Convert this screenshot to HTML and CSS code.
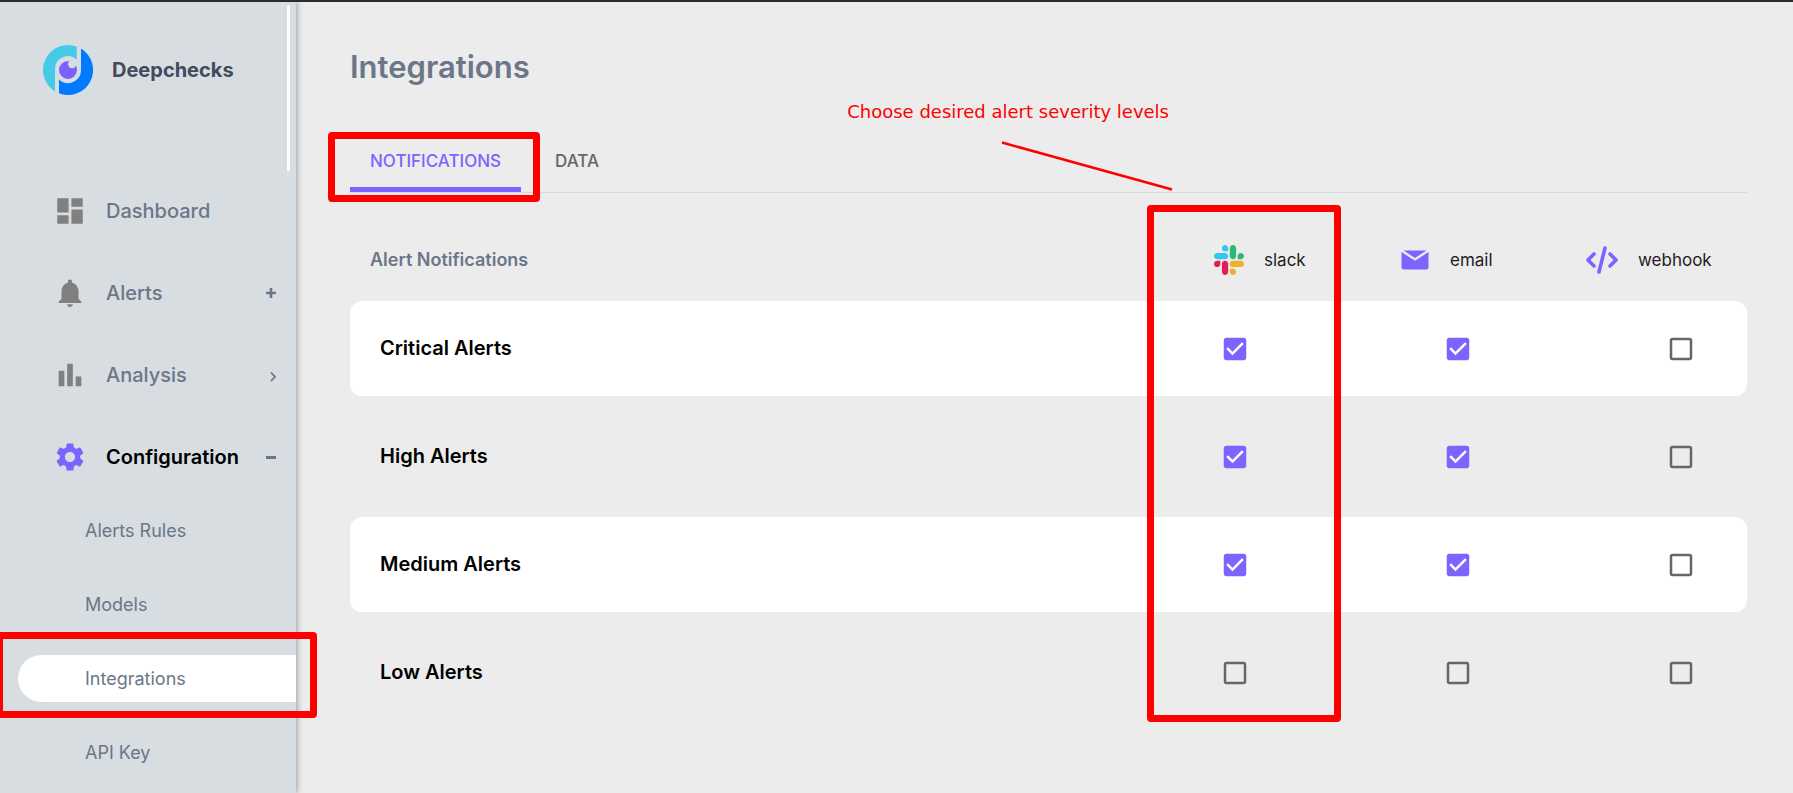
FILE: index.html
```html
<!DOCTYPE html>
<html lang="en">
<head>
<meta charset="utf-8">
<title>Deepchecks - Integrations</title>
<link rel="stylesheet" href="styles.css">
</head>
<body>
<div class="page">
  <aside class="sidebar">
    <div class="scroll-track"><div class="scroll-thumb"></div></div>
    <a class="brand" href="#">
      <svg class="brand-logo" viewBox="0 0 50 50" aria-hidden="true">
        <path fill="#43cbe8" d="M33.7 1.6V14.6A13 13 0 0 0 12 25V46.4A25 25 0 0 1 33.7 1.6z"/>
        <path fill="#007bff" d="M38 3.6A25 25 0 0 1 16 48.3V34.4A13 13 0 0 0 38 25z"/>
        <circle cx="25" cy="25" r="9" fill="#7b61ff"/>
        <circle cx="29.2" cy="19" r="4.2" fill="#d7dde1"/>
      </svg>
      <span>Deepchecks</span>
    </a>
    <nav class="nav">
      <a class="nav-item" href="#">
        <svg class="nav-icon" viewBox="0 0 24 24" aria-hidden="true"><path d="M3 13h8V3H3v10zm0 8h8v-6H3v6zm10 0h8V11h-8v10zm0-18v6h8V3h-8z"/></svg>
        <span>Dashboard</span>
      </a>
      <a class="nav-item" href="#">
        <svg class="nav-icon" viewBox="0 0 24 24" aria-hidden="true"><path d="M12 22c1.1 0 2-.9 2-2h-4c0 1.1.89 2 2 2zm6-6v-5c0-3.07-1.64-5.64-4.5-6.32V4c0-.83-.67-1.5-1.5-1.5s-1.5.67-1.5 1.5v.68C7.63 5.36 6 7.92 6 11v5l-2 2v1h16v-1l-2-2z"/></svg>
        <span>Alerts</span>
        <svg class="nav-mark" viewBox="0 0 10 10" aria-hidden="true"><path d="M0 5H10M5 0V10" stroke-width="2.6"/></svg>
      </a>
      <a class="nav-item" href="#">
        <svg class="nav-icon" viewBox="0 0 24 24" aria-hidden="true"><path d="M4 9h4v11H4zm12 4h4v7h-4zm-6-9h4v16h-4z"/></svg>
        <span>Analysis</span>
        <svg class="nav-mark" viewBox="0 0 10 10" aria-hidden="true"><path d="M5 2.500L9 6.800L5 11" stroke-width="1.8"/></svg>
      </a>
      <a class="nav-item nav-item-active" href="#">
        <svg class="nav-icon" viewBox="0 0 24 24" aria-hidden="true"><path d="M19.14 12.94c.04-.3.06-.61.06-.94 0-.32-.02-.64-.07-.94l2.03-1.58c.18-.14.23-.41.12-.61l-1.92-3.32c-.12-.22-.37-.29-.59-.22l-2.39.96c-.5-.38-1.03-.7-1.62-.94l-.36-2.54c-.04-.24-.24-.41-.48-.41h-3.84c-.24 0-.43.17-.47.41l-.36 2.54c-.59.24-1.13.57-1.62.94l-2.39-.96c-.22-.08-.47 0-.59.22L2.74 8.87c-.12.21-.08.47.12.61l2.03 1.58c-.05.3-.09.63-.09.94s.02.64.07.94l-2.03 1.58c-.18.14-.23.41-.12.61l1.92 3.32c.12.22.37.29.59.22l2.39-.96c.5.38 1.03.7 1.62.94l.36 2.54c.05.24.24.41.48.41h3.84c.24 0 .44-.17.47-.41l.36-2.54c.59-.24 1.13-.56 1.62-.94l2.39.96c.22.08.47 0 .59-.22l1.92-3.32c.12-.22.07-.47-.12-.61l-2.01-1.58zM12 15.6c-1.98 0-3.6-1.62-3.6-3.6s1.62-3.6 3.6-3.6 3.6 1.62 3.6 3.6-1.62 3.6-3.6 3.6z"/></svg>
        <span>Configuration</span>
        <svg class="nav-mark" viewBox="0 0 10 10" aria-hidden="true"><path d="M0 5.500H10" stroke-width="3"/></svg>
      </a>
      <div class="subnav">
        <a class="subnav-item" href="#">Alerts Rules</a>
        <a class="subnav-item" href="#">Models</a>
        <a class="subnav-item subnav-item-active" href="#">Integrations</a>
        <a class="subnav-item" href="#">API Key</a>
      </div>
    </nav>
  </aside>

  <main class="main">
    <h1 class="title">Integrations</h1>
    <div class="tabs" role="tablist">
      <button class="tab tab-active" role="tab" aria-selected="true">NOTIFICATIONS</button>
      <button class="tab" role="tab" aria-selected="false">DATA</button>
    </div>
    <table class="alerts">
      <thead>
        <tr>
          <th class="col-name" scope="col">Alert Notifications</th>
          <th class="col-slack" scope="col">
            <div class="channel">
              <svg class="channel-icon" viewBox="0 0 122.8 122.8" aria-hidden="true">
                <path fill="#e01e5a" d="M25.8 77.6c0 7.1-5.8 12.9-12.9 12.9S0 84.7 0 77.6s5.8-12.9 12.9-12.9h12.9v12.9zM32.3 77.6c0-7.1 5.8-12.9 12.9-12.9s12.9 5.8 12.9 12.9v32.3c0 7.1-5.8 12.9-12.9 12.9s-12.9-5.8-12.9-12.9V77.6z"/>
                <path fill="#36c5f0" d="M45.2 25.8c-7.1 0-12.9-5.8-12.9-12.9S38.1 0 45.2 0s12.9 5.8 12.9 12.9v12.9H45.2zM45.2 32.3c7.1 0 12.9 5.8 12.9 12.9s-5.8 12.9-12.9 12.9H12.9C5.8 58.1 0 52.3 0 45.2s5.8-12.9 12.9-12.9h32.3z"/>
                <path fill="#2eb67d" d="M97 45.2c0-7.1 5.8-12.9 12.9-12.9s12.9 5.8 12.9 12.9-5.8 12.9-12.9 12.9H97V45.2zM90.5 45.2c0 7.1-5.8 12.9-12.9 12.9s-12.9-5.8-12.9-12.9V12.9C64.7 5.8 70.5 0 77.6 0s12.9 5.8 12.9 12.9v32.3z"/>
                <path fill="#ecb22e" d="M77.6 97c7.1 0 12.9 5.8 12.9 12.9s-5.8 12.9-12.9 12.9-12.9-5.8-12.9-12.9V97h12.9zM77.6 90.5c-7.1 0-12.9-5.8-12.9-12.9s5.8-12.9 12.9-12.9h32.3c7.1 0 12.9 5.8 12.9 12.9s-5.8 12.9-12.9 12.9H77.6z"/>
              </svg>
              <span>slack</span>
            </div>
          </th>
          <th class="col-email" scope="col">
            <div class="channel">
              <svg class="channel-icon" viewBox="0 0 30 30" aria-hidden="true">
                <path fill="#7b64ff" d="M3.600 5.500H26.400L15 13zM1.500 7L15 15.800L28.500 7V22.500Q28.500 24.500 26.500 24.500H3.500Q1.500 24.500 1.500 22.500z"/>
              </svg>
              <span>email</span>
            </div>
          </th>
          <th class="col-webhook" scope="col">
            <div class="channel">
              <svg class="channel-icon channel-icon-wide" viewBox="0 0 32 28" aria-hidden="true">
                <path fill="none" stroke="#7b64ff" stroke-width="3.6" stroke-linecap="round" stroke-linejoin="round" d="M8 8L2 14L8 20M24 8L30 14L24 20M19 2L13 26"/>
              </svg>
              <span>webhook</span>
            </div>
          </th>
        </tr>
      </thead>
      <tbody>
        <tr class="row-white">
          <th scope="row">Critical Alerts</th>
          <td><input type="checkbox" aria-label="Critical Alerts slack" checked></td>
          <td><input type="checkbox" aria-label="Critical Alerts email" checked></td>
          <td><input type="checkbox" aria-label="Critical Alerts webhook"></td>
        </tr>
        <tr>
          <th scope="row">High Alerts</th>
          <td><input type="checkbox" aria-label="High Alerts slack" checked></td>
          <td><input type="checkbox" aria-label="High Alerts email" checked></td>
          <td><input type="checkbox" aria-label="High Alerts webhook"></td>
        </tr>
        <tr class="row-white">
          <th scope="row">Medium Alerts</th>
          <td><input type="checkbox" aria-label="Medium Alerts slack" checked></td>
          <td><input type="checkbox" aria-label="Medium Alerts email" checked></td>
          <td><input type="checkbox" aria-label="Medium Alerts webhook"></td>
        </tr>
        <tr>
          <th scope="row">Low Alerts</th>
          <td><input type="checkbox" aria-label="Low Alerts slack"></td>
          <td><input type="checkbox" aria-label="Low Alerts email"></td>
          <td><input type="checkbox" aria-label="Low Alerts webhook"></td>
        </tr>
      </tbody>
    </table>
  </main>

  <div class="mark mark-tab"></div>
  <div class="mark mark-nav"></div>
  <div class="mark mark-slack"></div>
  <p class="note">Choose desired alert severity levels</p>
  <svg class="pointer" viewBox="0 0 174 52" aria-hidden="true"><path d="M2 2.500L172 49.500" stroke="#f00" stroke-width="2.500"/></svg>
</div>
</body>
</html>
```
FILE: styles.css
```css
* {
  box-sizing: border-box;
}

body {
  margin: 0;
  background: #ececec;
  font-family: Inter, "Open Sans", sans-serif;
  color: #000;
}

.page {
  position: relative;
  display: flex;
  min-height: 100vh;
  border-top: 2px solid #2b2a2c;
  overflow: hidden;
}

/* Sidebar */
.sidebar {
  position: relative;
  flex: 0 0 296px;
  padding-top: 43px;
  background: #d7dde1;
  box-shadow: 1px 0 6px rgba(0, 0, 0, 0.35);
}

.brand {
  display: flex;
  align-items: center;
  gap: 19px;
  padding-left: 43px;
  font-size: 20px;
  font-weight: 700;
  line-height: 24px;
  color: #434a5c;
  text-decoration: none;
}

.brand-logo {
  width: 50px;
  height: 50px;
}

.nav {
  position: relative;
  padding-top: 75px;
}

.nav-item {
  display: flex;
  align-items: center;
  gap: 19px;
  height: 82px;
  padding: 0 20px 0 53px;
  font-size: 20px;
  font-weight: 500;
  line-height: 24px;
  color: #6c7689;
  text-decoration: none;
}

.nav-item-active {
  font-weight: 600;
  color: #000;
}

.nav-icon {
  width: 34px;
  height: 34px;
  fill: #808080;
}

.nav-item-active .nav-icon {
  fill: #7b64ff;
}

.nav-mark {
  width: 10px;
  height: 10px;
  margin-left: auto;
  fill: none;
  stroke: #6c7689;
  overflow: visible;
}

.subnav {
  display: flex;
  flex-direction: column;
  gap: 27px;
  padding: 9px 0 12px 18px;
}

.subnav-item {
  padding-left: 67px;
  border-radius: 24px 0 0 24px;
  font-size: 18px;
  line-height: 47px;
  color: #6c7689;
  text-decoration: none;
}

.subnav-item-active {
  background: #fff;
}

.scroll-track {
  position: absolute;
  top: 3px;
  right: 6px;
  bottom: 0;
  width: 3px;
  background: #dbdee4;
}

.scroll-thumb {
  height: 166px;
  border-radius: 2px;
  background: #fff;
}

/* Main content */
.main {
  flex: 1;
  min-width: 0;
  padding: 45px 46px 40px 54px;
}

.title {
  margin: 0;
  font-size: 31px;
  font-weight: 600;
  line-height: 40px;
  color: #6c7689;
}

.tabs {
  display: flex;
  gap: 14px;
  margin-top: 42px;
  border-bottom: 1px solid #d3d9de;
}

.tab {
  height: 63px;
  padding: 5px 20px 0;
  border: 0;
  border-bottom: 5px solid transparent;
  background: none;
  font: 500 17px/24px Inter, "Open Sans", sans-serif;
  color: #666;
}

.tab-active {
  border-bottom-color: #7b64ff;
  color: #7b64ff;
}

.alerts {
  width: 100%;
  margin-top: 26px;
  border-spacing: 0 13px;
  table-layout: fixed;
}

.alerts th,
.alerts td {
  padding: 0;
  text-align: left;
  vertical-align: middle;
}

.alerts thead th {
  height: 56px;
  font-size: 17px;
  font-weight: 400;
  line-height: 24px;
  color: #1c1c1e;
}

.alerts thead .col-name {
  padding-left: 20px;
  font-size: 18px;
  font-weight: 600;
  color: #6c7689;
}

.alerts .col-slack {
  width: 223px;
  padding-left: 104px;
}

.alerts .col-email {
  width: 223px;
  padding-left: 67px;
}

.alerts .col-webhook {
  width: 191px;
  padding-left: 30px;
}

.channel {
  display: flex;
  align-items: center;
  gap: 20px;
}

.channel-icon {
  width: 30px;
  height: 30px;
}

.channel-icon-wide {
  width: 32px;
  height: 28px;
}

.alerts tbody th {
  height: 95px;
  padding-left: 30px;
  padding-bottom: 2px;
  font-size: 20px;
  font-weight: 600;
  line-height: 24px;
}

.alerts tbody td {
  padding-left: 110px;
}

.row-white th,
.row-white td {
  background: #fff;
}

.row-white th {
  border-radius: 12px 0 0 12px;
}

.row-white td:last-child {
  border-radius: 0 12px 12px 0;
}

.alerts input {
  display: block;
  width: 30px;
  height: 30px;
  margin: 0;
  appearance: none;
  background: url("data:image/svg+xml,%3Csvg xmlns='http://www.w3.org/2000/svg' viewBox='0 0 24 24'%3E%3Cpath fill='%23666' d='M19 5v14H5V5h14m0-2H5c-1.1 0-2 .9-2 2v14c0 1.1.9 2 2 2h14c1.1 0 2-.9 2-2V5c0-1.1-.9-2-2-2z'/%3E%3C/svg%3E") center / contain no-repeat;
}

.alerts input:checked {
  background-image: url("data:image/svg+xml,%3Csvg xmlns='http://www.w3.org/2000/svg' viewBox='0 0 24 24'%3E%3Cpath fill='%237b64ff' d='M19 3H5c-1.11 0-2 .9-2 2v14c0 1.1.89 2 2 2h14c1.11 0 2-.9 2-2V5c0-1.1-.89-2-2-2z'/%3E%3Cpath fill='%23fff' d='M10 17l-5-5 1.41-1.41L10 14.17l7.59-7.59L19 8l-9 9z'/%3E%3C/svg%3E");
}

/* Annotations over the page */
.mark {
  position: absolute;
  border: 7px solid #f00;
  border-radius: 4px;
  pointer-events: none;
}

.mark-tab {
  top: 130px;
  left: 328px;
  width: 212px;
  height: 70px;
}

.mark-nav {
  top: 630px;
  left: -4px;
  width: 321px;
  height: 86px;
}

.mark-slack {
  top: 203px;
  right: 452px;
  width: 194px;
  height: 517px;
}

.note {
  position: absolute;
  top: 98px;
  right: 624px;
  margin: 0;
  font: 18px/24px "DejaVu Sans", sans-serif;
  color: #f00;
}

.pointer {
  position: absolute;
  top: 138px;
  right: 619px;
  width: 174px;
  height: 52px;
}
```
